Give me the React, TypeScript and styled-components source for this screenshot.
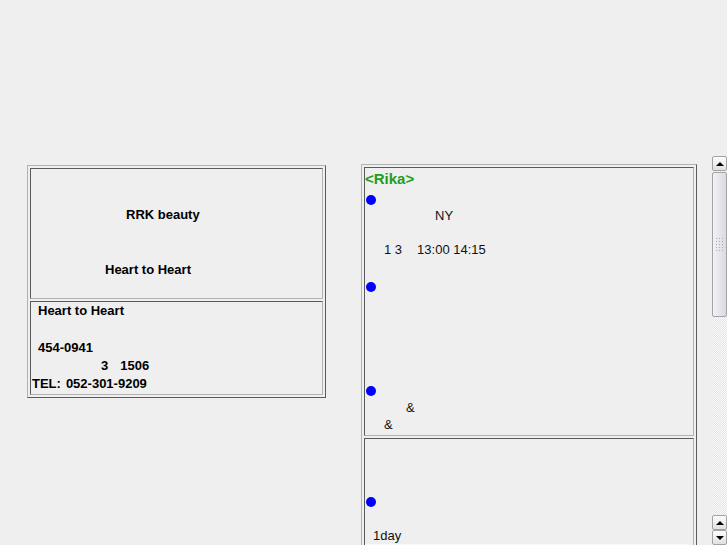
import React from "react";
import styled, { createGlobalStyle } from "styled-components";

const GlobalStyle = createGlobalStyle`
  html, body {
    margin: 0;
    padding: 0;
    background: #efefef;
  }
  body {
    font-family: "Liberation Sans", Arial, sans-serif;
    font-size: 13px;
    color: #000;
    overflow: hidden;
  }
`;

const Page = styled.div`
  display: flex;
  align-items: flex-start;
  height: 545px;
  box-sizing: border-box;
  padding: 155px 0 0 27px;
  overflow: hidden;
`;

const Frame = styled.div<{ $width: number; $top: number }>`
  width: ${(p) => p.$width}px;
  margin-top: ${(p) => p.$top}px;
  box-sizing: border-box;
  border: 1px solid;
  border-color: #b2b2b2 #5a5a5a #5a5a5a #b2b2b2;
  padding: 2px;
  display: flex;
  flex-direction: column;
  gap: 2px;
`;

const Cell = styled.div<{ $height?: number }>`
  box-sizing: border-box;
  height: ${(p) => (p.$height ? `${p.$height}px` : "auto")};
  border: 1px solid;
  border-color: #5a5a5a #b2b2b2 #b2b2b2 #5a5a5a;
  display: flow-root;
`;

const BoldLine = styled.div<{ $indent?: number; $top?: number }>`
  font-weight: bold;
  line-height: 18px;
  height: 18px;
  white-space: pre;
  padding-left: ${(p) => p.$indent || 0}px;
  margin-top: ${(p) => p.$top || 0}px;
`;

const Line = styled.div<{ $indent?: number; $top?: number }>`
  line-height: 17px;
  height: 17px;
  color: #111;
  white-space: pre;
  padding-left: ${(p) => p.$indent || 0}px;
  margin-top: ${(p) => p.$top || 0}px;
`;

const Gap = styled.span<{ $w: number }>`
  margin-left: ${(p) => p.$w}px;
`;

const Name = styled.div`
  font-size: 15px;
  font-weight: bold;
  color: #1e9e1e;
  line-height: 21px;
  height: 22px;
`;

const DotRow = styled.div<{ $top?: number }>`
  height: 17px;
  box-sizing: border-box;
  padding: 5px 0 0 1px;
  margin-top: ${(p) => p.$top || 0}px;
`;

const Dot = styled.span`
  display: block;
  width: 10px;
  height: 10px;
  border-radius: 50%;
  background: #0000ff;
`;

const Field = styled.div`
  height: 30px;
  margin-right: 5px;
  background: #fafafa;
`;

const ScrollPane = styled.div`
  display: flex;
  width: 366px;
  height: 389px;
  margin: 1px 0 0 35px;
  overflow: hidden;
`;

const ScrollContent = styled.div`
  flex: 1;
  padding-top: 8px;
  overflow: hidden;
`;

const ScrollBar = styled.div`
  width: 15px;
  display: flex;
  flex-direction: column;
  background-color: #f6f6f6;
  background-image: repeating-conic-gradient(#e4e4e4 0 25%, #fbfbfb 0 50%);
  background-size: 2px 2px;
`;

const ArrowButton = styled.div<{ $down?: boolean }>`
  flex: none;
  height: 15px;
  box-sizing: border-box;
  border: 1px solid #a2a2a2;
  border-radius: 2px;
  background: linear-gradient(#fdfdfd, #e0e0e0);
  display: flex;
  align-items: center;
  justify-content: center;

  &::after {
    content: "";
    width: 0;
    height: 0;
    border-left: 4px solid transparent;
    border-right: 4px solid transparent;
    ${(p) =>
      p.$down
        ? "border-top: 4px solid #000;"
        : "border-bottom: 4px solid #000;"}
  }
`;

const Thumb = styled.div`
  flex: none;
  height: 145px;
  margin-top: 1px;
  box-sizing: border-box;
  border: 1px solid #a4a4a8;
  border-radius: 2px;
  background: linear-gradient(to right, #f2f2f6, #dadae0);
  display: flex;
  align-items: center;
  justify-content: center;
`;

const Grip = styled.div`
  width: 10px;
  height: 16px;
  background-image: radial-gradient(circle, #a8a8ae 0.7px, transparent 1px);
  background-size: 3px 3px;
`;

const Track = styled.div`
  flex: 1;
`;

export default function App() {
  return (
    <>
      <GlobalStyle />
      <Page>
        <Frame $width={299} $top={10}>
          <Cell $height={131}>
            <BoldLine $indent={95} $top={37}>
              RRK beauty
            </BoldLine>
            <BoldLine $indent={74} $top={37}>
              Heart to Heart
            </BoldLine>
          </Cell>
          <Cell $height={94}>
            <BoldLine $indent={7}>Heart to Heart</BoldLine>
            <BoldLine $indent={7} $top={19}>
              454-0941
            </BoldLine>
            <BoldLine $indent={70}>
              3<Gap $w={12}>1506</Gap>
            </BoldLine>
            <BoldLine $indent={1}>
              TEL:<Gap $w={5}>052-301-9209</Gap>
            </BoldLine>
          </Cell>
        </Frame>

        <ScrollPane>
          <ScrollContent>
            <Frame $width={336} $top={0}>
              <Cell $height={269}>
                <Name>&lt;Rika&gt;</Name>
                <DotRow>
                  <Dot />
                </DotRow>
                <Line $indent={70}>NY</Line>
                <Line $indent={19} $top={17}>
                  1 3<Gap $w={15}>13:00 14:15</Gap>
                </Line>
                <DotRow $top={19}>
                  <Dot />
                </DotRow>
                <DotRow $top={87}>
                  <Dot />
                </DotRow>
                <Line $indent={41} $top={1}>
                  &amp;
                </Line>
                <Line $indent={19}>&amp;</Line>
              </Cell>
              <Cell>
                <DotRow $top={53}>
                  <Dot />
                </DotRow>
                <Line $indent={8} $top={18}>
                  1day
                </Line>
                <Field />
              </Cell>
            </Frame>
          </ScrollContent>
          <ScrollBar>
            <ArrowButton />
            <Thumb>
              <Grip />
            </Thumb>
            <Track />
            <ArrowButton />
            <ArrowButton $down />
          </ScrollBar>
        </ScrollPane>
      </Page>
    </>
  );
}
